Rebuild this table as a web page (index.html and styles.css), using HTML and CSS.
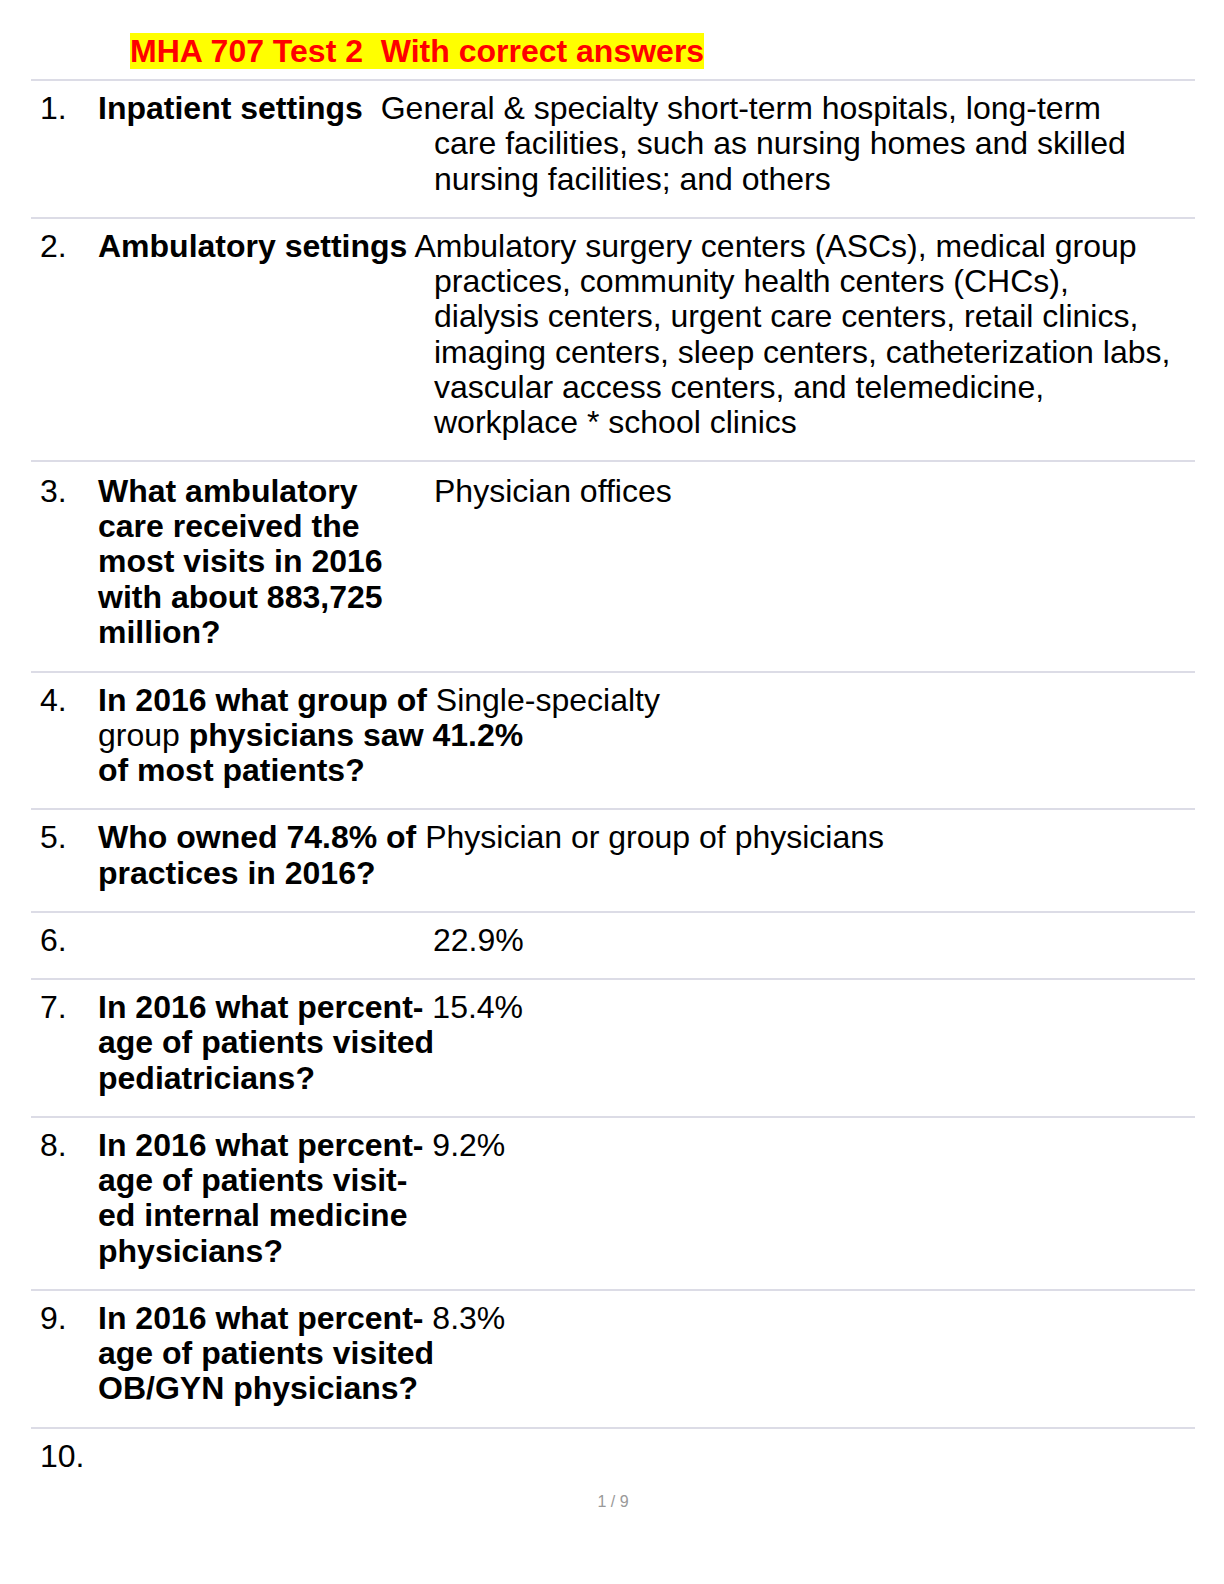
FILE: index.html
```html
<!DOCTYPE html>
<html lang="en">
<head>
<meta charset="utf-8">
<title>MHA 707 Test 2 With correct answers</title>
<link rel="stylesheet" href="styles.css">
</head>
<body>
<main class="page">
  <h1 class="title"><span class="title-mark">MHA 707 Test 2  With correct answers</span></h1>

  <section class="qa">
    <div class="row">
      <div class="num">1.</div>
      <div class="body">
        <div class="line"><b>Inpatient settings</b>  General &amp; specialty short-term hospitals, long-term</div>
        <div class="line ind">care facilities, such as nursing homes and skilled</div>
        <div class="line ind">nursing facilities; and others</div>
      </div>
    </div>

    <div class="row">
      <div class="num">2.</div>
      <div class="body">
        <div class="line"><b>Ambulatory settings</b> Ambulatory surgery centers (ASCs), medical group</div>
        <div class="line ind">practices, community health centers (CHCs),</div>
        <div class="line ind">dialysis centers, urgent care centers, retail clinics,</div>
        <div class="line ind">imaging centers, sleep centers, catheterization labs,</div>
        <div class="line ind">vascular access centers, and telemedicine,</div>
        <div class="line ind">workplace * school clinics</div>
      </div>
    </div>

    <div class="row row-gap">
      <div class="num">3.</div>
      <div class="body">
        <div class="line"><b class="qcol">What ambulatory</b>Physician offices</div>
        <div class="line"><b>care received the</b></div>
        <div class="line"><b>most visits in 2016</b></div>
        <div class="line"><b>with about 883,725</b></div>
        <div class="line"><b>million?</b></div>
      </div>
    </div>

    <div class="row">
      <div class="num">4.</div>
      <div class="body">
        <div class="line"><b>In 2016 what group of</b> Single-specialty</div>
        <div class="line">group <b>physicians saw 41.2%</b></div>
        <div class="line"><b>of most patients?</b></div>
      </div>
    </div>

    <div class="row">
      <div class="num">5.</div>
      <div class="body">
        <div class="line"><b>Who owned 74.8% of</b> Physician or group of physicians</div>
        <div class="line"><b>practices in 2016?</b></div>
      </div>
    </div>

    <div class="row">
      <div class="num">6.</div>
      <div class="body">
        <div class="line"><span class="qcol qcol-narrow"></span>22.9%</div>
      </div>
    </div>

    <div class="row">
      <div class="num">7.</div>
      <div class="body">
        <div class="line"><b>In 2016 what percent-</b> 15.4%</div>
        <div class="line"><b>age of patients visited</b></div>
        <div class="line"><b>pediatricians?</b></div>
      </div>
    </div>

    <div class="row">
      <div class="num">8.</div>
      <div class="body">
        <div class="line"><b>In 2016 what percent-</b> 9.2%</div>
        <div class="line"><b>age of patients visit-</b></div>
        <div class="line"><b>ed internal medicine</b></div>
        <div class="line"><b>physicians?</b></div>
      </div>
    </div>

    <div class="row">
      <div class="num">9.</div>
      <div class="body">
        <div class="line"><b>In 2016 what percent-</b> 8.3%</div>
        <div class="line"><b>age of patients visited</b></div>
        <div class="line"><b>OB/GYN physicians?</b></div>
      </div>
    </div>

    <div class="row row-last">
      <div class="num">10.</div>
      <div class="body"></div>
    </div>
  </section>

  <footer class="pager">1 / 9</footer>
</main>
</body>
</html>
```

FILE: styles.css
```css
html, body {
  margin: 0;
  padding: 0;
  background: #ffffff;
}

body {
  font-family: "Liberation Sans", Arial, Helvetica, sans-serif;
  color: #000000;
}

.page {
  width: 1164px;
  margin-left: 31px;
  padding-top: 33px;
}

.title {
  margin: 0 0 10px 0;
  padding-left: 99px;
  font-size: 32px;
  font-weight: bold;
  line-height: 36px;
  height: 36px;
}

.title-mark {
  white-space: pre;
  background: #ffff00;
  color: #ff0000;
}

.qa {
  font-size: 32px;
  line-height: 35.25px;
}

.row {
  display: flex;
  border-top: 2px solid #dcdce6;
  padding: 10px 0 20px 0;
}

.row-gap {
  padding-top: 11.5px;
  padding-bottom: 20.5px;
}

.row-last {
  padding-bottom: 0;
}

.num {
  width: 58px;
  flex: none;
  padding-left: 9px;
}

.body {
  flex: 1;
  min-height: 35.25px;
}

.line {
  white-space: pre;
  height: 35.25px;
}

.line b {
  font-weight: bold;
}

.ind {
  padding-left: 336px;
}

.qcol {
  display: inline-block;
  width: 336px;
}

.qcol-narrow {
  width: 335px;
}

.pager {
  margin-top: 19px;
  text-align: center;
  font-size: 16px;
  line-height: 18px;
  color: #999999;
}
```
